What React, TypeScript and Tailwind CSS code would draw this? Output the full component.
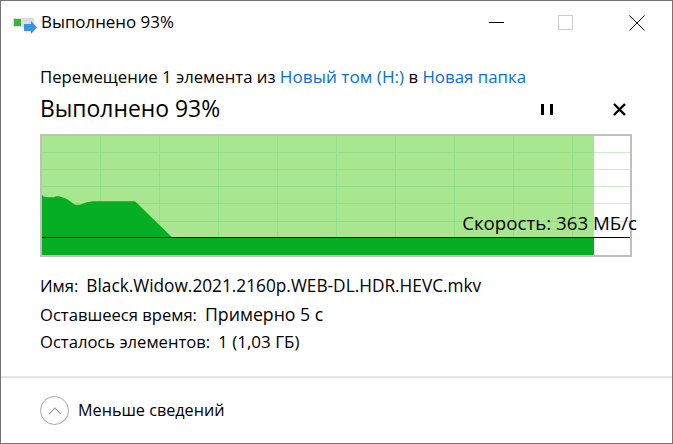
export default function App() {
  return (
    <div className="relative flex h-[444px] w-[673px] flex-col overflow-hidden border border-[#737373] bg-white font-['Open_Sans','Noto_Sans',sans-serif] text-[17px] text-black">
      {/* Title bar */}
      <div className="flex h-[43px] shrink-0 items-center pl-[12px]">
        <svg width="24" height="16" viewBox="0 0 24 16" className="mr-[4px] mt-[7px]">
          <rect x="0" y="0" width="21" height="9" fill="#dcdcdc" />
          <rect x="1" y="1" width="7" height="7" fill="#38b538" />
          <path d="M11 6h7V3l6 6.5-6 6.5v-3h-7z" fill="#3a94e4" />
        </svg>
        <span className="flex-1 text-[16.9px] leading-none">Выполнено 93%</span>
        <div className="h-px w-[15px] bg-black" />
        <div className="ml-[54px] h-[15px] w-[15px] border border-[#cccccc]" />
        <svg width="16" height="16" viewBox="0 0 16 16" className="ml-[56px] mr-[27px]">
          <path d="M0.5 0.5l15 15M15.5 0.5l-15 15" stroke="#111" strokeWidth="1" fill="none" />
        </svg>
      </div>

      {/* Content */}
      <div className="flex flex-1 flex-col px-[39px] pt-[22px]">
        <div className="whitespace-nowrap text-[16.72px] leading-[22px]">
          Перемещение 1 элемента из <span className="text-[17.2px] text-[#0a6fd6]">Новый том (H:)</span> в{" "}
          <span className="text-[16.85px] text-[#0a6fd6]">Новая папка</span>
        </div>

        <div className="mt-[5px] flex h-[32px] items-center">
          <span className="flex-1 text-[22.9px] leading-none">Выполнено 93%</span>
          <div className="mr-[60px] flex gap-[6px]">
            <div className="h-[11px] w-[3px] bg-black" />
            <div className="h-[11px] w-[3px] bg-black" />
          </div>
          <svg width="13" height="13" viewBox="0 0 13 13" className="mr-[7px]">
            <path d="M1 1l11 11M12 1L1 12" stroke="#000" strokeWidth="2.4" fill="none" />
          </svg>
        </div>

        {/* Speed chart */}
        <div className="relative mt-[9px] h-[123px] w-[592px] border-2 border-[#bfbfbf]">
          <svg width="588" height="119" viewBox="0 0 588 119" className="block">
            <rect x="0" y="0" width="552" height="119" fill="#a9e690" />
            <clipPath id="fill-clip">
              <rect x="0" y="0" width="552" height="119" />
            </clipPath>
            <clipPath id="rest-clip">
              <rect x="552" y="0" width="36" height="119" />
            </clipPath>
            <path
              d="M58.5 0V119M117.5 0V119M176.5 0V119M235.5 0V119M294.5 0V119M353.5 0V119M412.5 0V119M471.5 0V119M530.5 0V119"
              stroke="#8fe088"
              strokeWidth="1"
              clipPath="url(#fill-clip)"
            />
            <path
              d="M0 16.5H588M0 33.5H588M0 50.5H588M0 67.5H588M0 85.5H588"
              stroke="#8fe088"
              strokeWidth="1"
              clipPath="url(#fill-clip)"
            />
            <path
              d="M0 16.5H588M0 33.5H588M0 50.5H588M0 67.5H588M0 85.5H588"
              stroke="#c9efca"
              strokeWidth="1"
              clipPath="url(#rest-clip)"
            />
            <path
              d="M0 59L1.3 60.3L4 61.3L12 61.3L14 60.3L17.3 60.3L23 62.3L26.3 64L33 68.7L38 68.7L44.7 66.3L51.3 65.3L93 65.3L129.7 101L552 101L552 119L0 119Z"
              fill="#06ae24"
            />
            <rect x="0" y="101" width="588" height="1" fill="#000" />
          </svg>
          <span className="absolute right-[-7px] top-[76px] whitespace-nowrap text-[18.7px] leading-[22px]">Скорость: 363 МБ/с</span>
        </div>

        {/* Details */}
        <div className="mt-[18px] flex flex-col gap-[5.5px] whitespace-nowrap leading-[22px]">
          <div className="flex items-baseline gap-[8px]">
            <span className="text-[16.6px]">Имя:</span>
            <span className="text-[17.25px]">Black.Widow.2021.2160p.WEB-DL.HDR.HEVC.mkv</span>
          </div>
          <div className="flex items-baseline gap-[8px]">
            <span className="text-[16.6px]">Оставшееся время:</span>
            <span className="text-[17.7px]">Примерно 5 с</span>
          </div>
          <div className="flex items-baseline gap-[8px]">
            <span className="text-[16.6px]">Осталось элементов:</span>
            <span>1 (1,03 ГБ)</span>
          </div>
        </div>
      </div>

      {/* Footer */}
      <div className="flex h-[67px] shrink-0 items-center border-t-2 border-[#e5e5e5] pl-[39px]">
        <div className="flex h-[29px] w-[29px] items-center justify-center rounded-full border border-[#a8a8a8]">
          <svg width="14" height="8" viewBox="0 0 14 8">
            <path d="M1 7l6-6 6 6" stroke="#a0a0a0" strokeWidth="1.2" fill="none" />
          </svg>
        </div>
        <span className="ml-[9px] text-[16.2px] leading-none">Меньше сведений</span>
      </div>

      {/* Darker edge left by the window behind */}
      <div className="absolute -left-px top-[429px] h-[14px] w-px bg-black" />
      <div className="absolute -bottom-px -left-px h-px w-[97px] bg-[#222222]" />
    </div>
  );
}
